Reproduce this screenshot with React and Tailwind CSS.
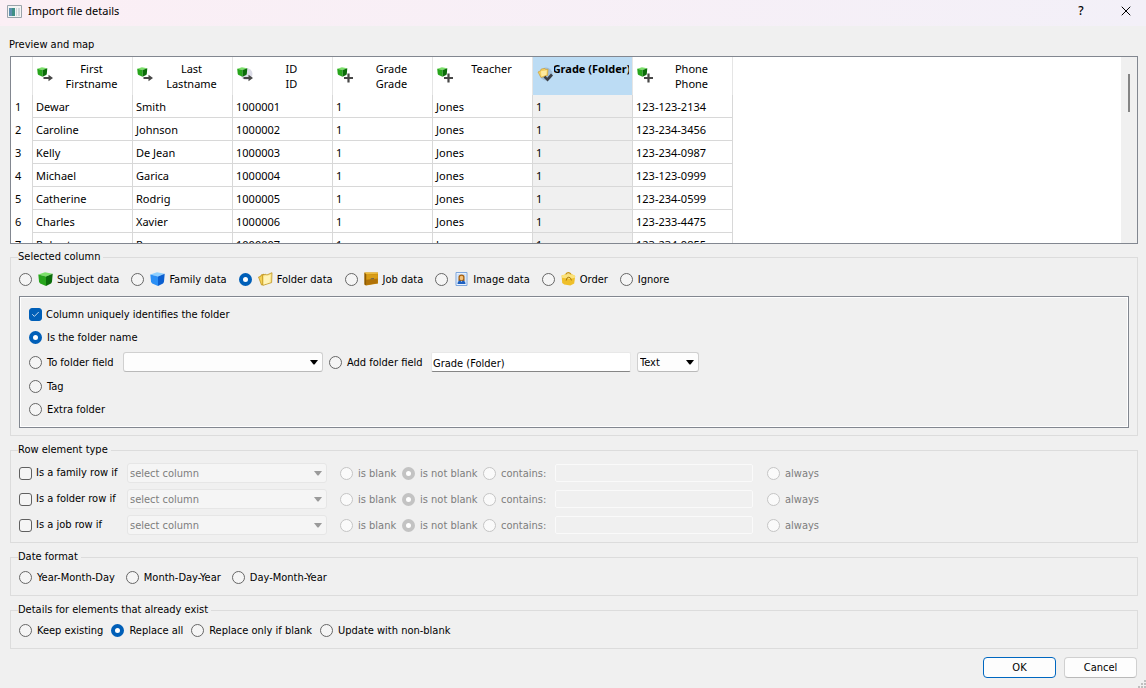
import { useId, useState } from 'react'
import { Check, X } from 'lucide-react'

const COLUMNS = [
  { lines: ['First', 'Firstname'], badge: 'arrow' },
  { lines: ['Last', 'Lastname'], badge: 'arrow' },
  { lines: ['ID', 'ID'], badge: 'arrow', glow: true },
  { lines: ['Grade', 'Grade'], badge: 'plus' },
  { lines: ['Teacher'], badge: 'plus' },
  { lines: ['Grade (Folder)'], badge: 'check', selected: true },
  { lines: ['Phone', 'Phone'], badge: 'plus' },
]

const ROWS = [
  ['Dewar', 'Smith', '1000001', '1', 'Jones', '1', '123-123-2134'],
  ['Caroline', 'Johnson', '1000002', '1', 'Jones', '1', '123-234-3456'],
  ['Kelly', 'De Jean', '1000003', '1', 'Jones', '1', '123-234-0987'],
  ['Michael', 'Garica', '1000004', '1', 'Jones', '1', '123-123-0999'],
  ['Catherine', 'Rodrig', '1000005', '1', 'Jones', '1', '123-234-0599'],
  ['Charles', 'Xavier', '1000006', '1', 'Jones', '1', '123-233-4475'],
  ['Robert', 'Rer', '1000007', '1', 'Jones', '1', '123-234-9855'],
]

const ROW_RULES = ['Is a family row if', 'Is a folder row if', 'Is a job row if']

function Cube({ top, left, right }) {
  return (
    <>
      <path d="M.3 2.4 7 .3 14.7 1.8 8 4.4Z" fill={top} />
      <path d="M.3 2.4 8 4.4V14L2.2 11.4Q1.2 10.8 1 9.6Z" fill={left} />
      <path d="M14.7 1.8 8 4.4V14L13 11.4Q13.9 10.8 14 9.6Z" fill={right} />
    </>
  )
}

function SubjectIcon() {
  return (
    <svg width="15" height="14" viewBox="0 0 15 14">
      <Cube top="#7ce06a" left="#27a51c" right="#0b6d0a" />
    </svg>
  )
}

function FamilyIcon() {
  return (
    <svg width="15" height="14" viewBox="0 0 15 14">
      <Cube top="#8fd0ff" left="#2b8ff5" right="#0b5fd0" />
    </svg>
  )
}

function FolderIcon() {
  return (
    <svg width="15" height="14" viewBox="0 0 15 14">
      <path d="M.5 5 3 4.2V3L6 2.2V12L3.5 13Z" fill="#f4cf52" stroke="#b88a10" strokeWidth=".7" />
      <path d="M4.5 3.2 8 2.2 8.8 3 14 .7 13.6 10.6 4.8 13.4Z" fill="#fbe58a" stroke="#b88a10" strokeWidth=".7" />
      <path d="M6 4.6 12.4 3 11.6 10.4 5.6 12.4Z" fill="#fff3b8" />
    </svg>
  )
}

function JobIcon() {
  return (
    <svg width="15" height="14" viewBox="0 0 15 14">
      <path d="M.5 .5H14V11.5L2 13.5 .5 12.5Z" fill="#c98a0c" />
      <path d="M.5 .5H14V1.8L2.2 2.6Z" fill="#edbd3e" />
      <path d="M2.2 3 13.6 2.2V6.2L2.2 7.4Z" fill="#d99d16" />
      <path d="M2.2 8 13.6 6.8V11.2L2.2 13Z" fill="#b07208" />
      <path d="M6 7.6 7.2 6.2 10 6V7Z" fill="#6b6252" />
      <path d="M.5 .5 2.2 2.6V13.4L.5 12.4Z" fill="#8c5a05" />
    </svg>
  )
}

function ImageIcon() {
  return (
    <svg width="15" height="14" viewBox="0 0 15 14">
      <path d="M2 .5H13V13.5H2Z" fill="#e8f1fd" stroke="#7ea6dc" />
      <path d="M3.5 2H11.5V12H3.5Z" fill="#c7ddf7" />
      <path d="M4.5 9V5Q4.5 2.4 7.5 2.4T10.5 5V9Z" fill="#a8600f" />
      <ellipse cx="7.5" cy="6" rx="1.8" ry="2.3" fill="#f4c27c" />
      <path d="M3.5 12Q3.7 8.6 6.3 8.4L7.5 10 8.7 8.4Q11.3 8.6 11.5 12Z" fill="#1d5fc0" />
    </svg>
  )
}

function OrderIcon() {
  return (
    <svg width="15" height="14" viewBox="0 0 15 14">
      <path d="M4.5 3.5Q5.4.7 7.6.7 10 1 10.2 4" fill="none" stroke="#c99712" strokeWidth="1.3" />
      <path d="M.6 3.4 4 2.4 11.6 2.4 14.2 4 13.2 11.4 9.4 13.6 3.2 12.6 1.2 11Z" fill="#efbf2a" />
      <path d="M.6 3.4 4 2.4 11.6 2.4 14.2 4 13.9 5.8 9 7 1 5.8Z" fill="#fbe27a" />
      <path d="M5.2 8.6Q5.6 5 7.8 5.2T10.4 8.4" fill="none" stroke="#a87709" />
    </svg>
  )
}

function HeaderIcon({ badge, glow }) {
  return (
    <svg width="17" height="17" viewBox="0 0 17 17" className="shrink-0">
      {glow && <circle cx="9.5" cy="8" r="6" fill="#8a8ab0" opacity=".3" />}
      {badge === 'check' ? (
        <>
          <circle cx="9" cy="8" r="6.5" fill="#6f8cae" opacity=".35" />
          <path d="M1 6 3.5 4.8 4.2 3 8 2.4 8.6 3.4 11 3.2 10.6 9.4 4 11.6Z" fill="#f6cf5e" stroke="#c79b2c" strokeWidth=".6" />
          <path d="M4 5.2 9.8 4.2 9.4 8.8 4.4 10.4Z" fill="#fdeaa0" />
        </>
      ) : (
        <g transform="translate(0 1) scale(.7)">
          <Cube top="#7ce06a" left="#27a51c" right="#0b6d0a" />
        </g>
      )}
      {badge === 'arrow' && <path d="M6.5 11H11.5V8.8L16 12 11.5 15.2V13H6.5Z" fill="#484848" />}
      {badge === 'plus' && <path d="M10.4 7.5H12.6V10.9H16V13.1H12.6V16.5H10.4V13.1H7V10.9H10.4Z" fill="#484848" />}
      {badge === 'check' && <path d="M6.5 11.5 8.4 9.8 10.2 11.8 14 7.6 16 9.4 10.6 15.6Z" fill="#3c3f45" />}
    </svg>
  )
}

const COLUMN_KINDS = [
  { label: 'Subject data', icon: <SubjectIcon /> },
  { label: 'Family data', icon: <FamilyIcon /> },
  { label: 'Folder data', icon: <FolderIcon /> },
  { label: 'Job data', icon: <JobIcon /> },
  { label: 'Image data', icon: <ImageIcon /> },
  { label: 'Order', icon: <OrderIcon /> },
  { label: 'Ignore' },
]

function Radio({ label, icon, disabled, className = '', ...rest }) {
  return (
    <label className={`flex items-center whitespace-nowrap ${disabled ? 'text-[#7d7d7d]' : ''} ${className}`}>
      <input
        type="radio"
        disabled={disabled}
        className="size-[13px] shrink-0 appearance-none rounded-full border border-[#666] bg-[#f5f5f5] checked:border-4 checked:border-[#005fb8] checked:bg-white disabled:border-[#c5c5c5] disabled:bg-[#fafafa]"
        {...rest}
      />
      {icon && <span className="-mr-px ml-[6px]">{icon}</span>}
      <span className="ml-[5px] pt-[2px]">{label}</span>
    </label>
  )
}

function Checkbox({ label, defaultChecked }) {
  return (
    <label className="flex items-center gap-1 whitespace-nowrap">
      <span className="grid size-[13px] shrink-0 place-items-center">
        <input
          type="checkbox"
          defaultChecked={defaultChecked}
          className="peer col-start-1 row-start-1 size-[13px] appearance-none rounded-[3px] border border-[#606060] bg-[#f5f5f5] checked:border-[#005fb8] checked:bg-[#005fb8]"
        />
        <Check size={9} strokeWidth={2} className="pointer-events-none invisible col-start-1 row-start-1 text-white peer-checked:visible" />
      </span>
      <span className="pt-px">{label}</span>
    </label>
  )
}

function Select({ label, options, disabled, className }) {
  return (
    <div className={`grid items-center ${className}`}>
      <select
        aria-label={label}
        disabled={disabled}
        className="col-start-1 row-start-1 h-5 w-full appearance-none rounded-[3px] border border-[#d0d0d0] border-b-[#b9b9b9] bg-[#fdfdfd] pt-[2px] pl-[2px] disabled:border-[#e6e6e6] disabled:bg-[#f5f5f5] disabled:text-[#7d7d7d] disabled:opacity-100"
      >
        {options.map((o) => <option key={o}>{o}</option>)}
      </select>
      <svg
        width="8"
        height="5"
        viewBox="0 0 8 5"
        className={`pointer-events-none col-start-1 row-start-1 mr-[5px] justify-self-end ${disabled ? 'text-[#9a9a9a]' : 'text-black'}`}
      >
        <path d="M0 0H8L4.5 4.5H3.5Z" fill="currentColor" />
      </svg>
    </div>
  )
}

function Group({ title, className = '', children }) {
  return (
    <fieldset className={`min-w-0 border border-[#dcdcdc] px-2 ${className}`}>
      <legend className="-ml-px pr-[3px] leading-[14px]">{title}</legend>
      {children}
    </fieldset>
  )
}

function PreviewTable() {
  return (
    <div className="flex h-[188px] border border-[#828790] bg-white font-['Noto_Sans',sans-serif]">
      <div className="min-w-0 flex-1 overflow-hidden">
        <table className="w-[722px] table-fixed border-separate border-spacing-0">
          <thead>
            <tr className="h-[38px]">
              <th aria-label="Row" className="w-[22px] border-r border-[#e5e5e5]" />
              {COLUMNS.map((c, i) => (
                <th
                  key={i}
                  className={`border-r border-[#e5e5e5] p-0 align-top ${c.selected ? 'bg-[#bcdcf4] font-bold' : 'font-normal'}`}
                >
                  <div className="flex pt-1 pr-[3px] pl-1">
                    <div className="pt-[5px]"><HeaderIcon badge={c.badge} glow={c.glow} /></div>
                    <div className="flex min-w-0 flex-1 flex-col items-center overflow-hidden leading-[15px] whitespace-nowrap">
                      {c.lines.map((l, j) => <span key={j}>{l}</span>)}
                    </div>
                  </div>
                </th>
              ))}
            </tr>
          </thead>
          <tbody>
            {ROWS.map((row, r) => (
              <tr key={r} className="h-[23px]">
                <th className="border-r border-[#d8d8d8] p-0 pt-px pl-1 text-left font-normal">{r + 1}</th>
                {row.map((cell, c) => (
                  <td
                    key={c}
                    className={`border-r border-b border-[#d8d8d8] p-0 pt-[2px] pl-[3px] ${COLUMNS[c].selected ? 'bg-[#f0f0f0]' : ''}`}
                  >
                    {cell}
                  </td>
                ))}
              </tr>
            ))}
          </tbody>
        </table>
      </div>
      <div className="flex w-4 justify-center bg-[#f0f0f0] pt-[17px]">
        <div className="h-[38px] w-[2px] bg-[#858585]" />
      </div>
    </div>
  )
}

function RowRule({ label }) {
  const name = useId()
  return (
    <div className="grid h-[26px] grid-cols-[108px_213px_62px_81px_72px_212px_auto] items-center">
      <Checkbox label={label} />
      <Select label={`${label}: column`} options={['select column']} disabled className="w-[200px]" />
      <Radio name={name} label="is blank" disabled />
      <Radio
        name={name}
        label="is not blank"
        disabled
        defaultChecked
        className="[&>input:checked]:border-[#c3c3c3] [&>input:checked]:bg-white"
      />
      <Radio name={name} label="contains:" disabled />
      <input
        type="text"
        aria-label={`${label}: contains`}
        disabled
        className="h-[18px] w-[198px] rounded-[2px] border border-[#fafafa] px-[2px]"
      />
      <Radio name={name} label="always" disabled />
    </div>
  )
}

export default function App() {
  const [kind, setKind] = useState('Folder data')
  const [fieldName, setFieldName] = useState('Grade (Folder)')

  return (
    <div className="min-h-screen bg-[#f0f0f0] font-['DejaVu_Sans_Condensed','DejaVu_Sans',sans-serif] text-[11px] text-black">
      <header className="flex h-[26px] items-center bg-linear-to-r from-[#fbeff5] to-[#f3f0f8] pr-3 pb-1 pl-[7px] font-['Noto_Sans',sans-serif]">
        <svg width="15" height="13" viewBox="0 0 15 13">
          <path d="M.5.5H14.5V12.5H.5Z" fill="#f4f4f4" stroke="#9aa3aa" />
          <path d="M2 3H8V11H2Z" fill="#3f8f86" />
          <path d="M2 3H5V11H2Z" fill="#5f8fb0" />
          <path d="M9 3H10V11H9ZM11 3H13V11H11Z" fill="#cfd5da" />
        </svg>
        <h1 className="ml-[6px] flex-1">Import file details</h1>
        <button aria-label="Help" className="w-3 text-center text-[12px] leading-4 font-medium">?</button>
        <button aria-label="Close" className="ml-[31px] grid size-4 place-items-center">
          <X size={16} strokeWidth={1.5} />
        </button>
      </header>

      <main className="pr-2 pl-[10px]">
        <h2 className="-ml-px pt-[11px] pb-[3px] leading-4">Preview and map</h2>
        <PreviewTable />

        <Group title="Selected column" className="mt-[6px] pb-[7px]">
          <div className="flex h-[27px] items-center gap-3 pt-[3px]">
            {COLUMN_KINDS.map((k) => (
              <Radio
                key={k.label}
                name="kind"
                label={k.label}
                icon={k.icon}
                checked={kind === k.label}
                onChange={() => setKind(k.label)}
              />
            ))}
          </div>
          <div className="mt-[5px] border border-[#828790] px-[9px] py-[6px] inset-shadow-[0_0_0_1px_#ffffff]">
            <div className="flex h-[23px] items-center">
              <Checkbox label="Column uniquely identifies the folder" defaultChecked />
            </div>
            <Radio name="target" label="Is the folder name" defaultChecked className="h-[23px]" />
            <div className="flex h-[26px] items-center gap-[6px]">
              <Radio name="target" label="To folder field" className="w-[88px]" />
              <Select label="Folder field" options={['']} className="w-[200px]" />
              <Radio name="target" label="Add folder field" className="w-[96px]" />
              <input
                type="text"
                aria-label="New folder field"
                value={fieldName}
                onChange={(e) => setFieldName(e.target.value)}
                className="h-5 w-[200px] rounded-[2px] border border-[#e8e8e8] border-b-[#868686] bg-white px-[1px] pt-[2px]"
              />
              <Select label="Field type" options={['Text']} className="w-[62px]" />
            </div>
            <Radio name="target" label="Tag" className="h-[23px]" />
            <Radio name="target" label="Extra folder" className="h-[23px]" />
          </div>
        </Group>

        <Group title="Row element type" className="mt-[7px] pt-[3px] pb-1">
          {ROW_RULES.map((r) => <RowRule key={r} label={r} />)}
        </Group>

        <Group title="Date format" className="mt-[7px] pb-[5px]">
          <div className="flex h-[26px] items-center gap-[11px]">
            <Radio name="date" label="Year-Month-Day" />
            <Radio name="date" label="Month-Day-Year" />
            <Radio name="date" label="Day-Month-Year" />
          </div>
        </Group>

        <Group title="Details for elements that already exist" className="mt-[7px] pb-[5px]">
          <div className="flex h-[26px] items-center gap-2">
            <Radio name="existing" label="Keep existing" />
            <Radio name="existing" label="Replace all" defaultChecked />
            <Radio name="existing" label="Replace only if blank" />
            <Radio name="existing" label="Update with non-blank" />
          </div>
        </Group>

        <div className="mt-2 flex justify-end gap-2 pr-px">
          <button className="h-[21px] w-[73px] rounded-[4px] border border-[#0067c0] bg-[#fdfdfd] pt-px">OK</button>
          <button className="h-[21px] w-[73px] rounded-[4px] border border-[#d0d0d0] border-b-[#b9b9b9] bg-[#fdfdfd] pt-px">Cancel</button>
        </div>
      </main>

      <svg width="8" height="8" viewBox="0 0 8 8" className="fixed right-0 bottom-0">
        <path d="M6 0H8V2H6ZM3 3H5V5H3ZM6 3H8V5H6ZM0 6H2V8H0ZM3 6H5V8H3ZM6 6H8V8H6Z" fill="#bfbfbf" />
      </svg>
    </div>
  )
}
